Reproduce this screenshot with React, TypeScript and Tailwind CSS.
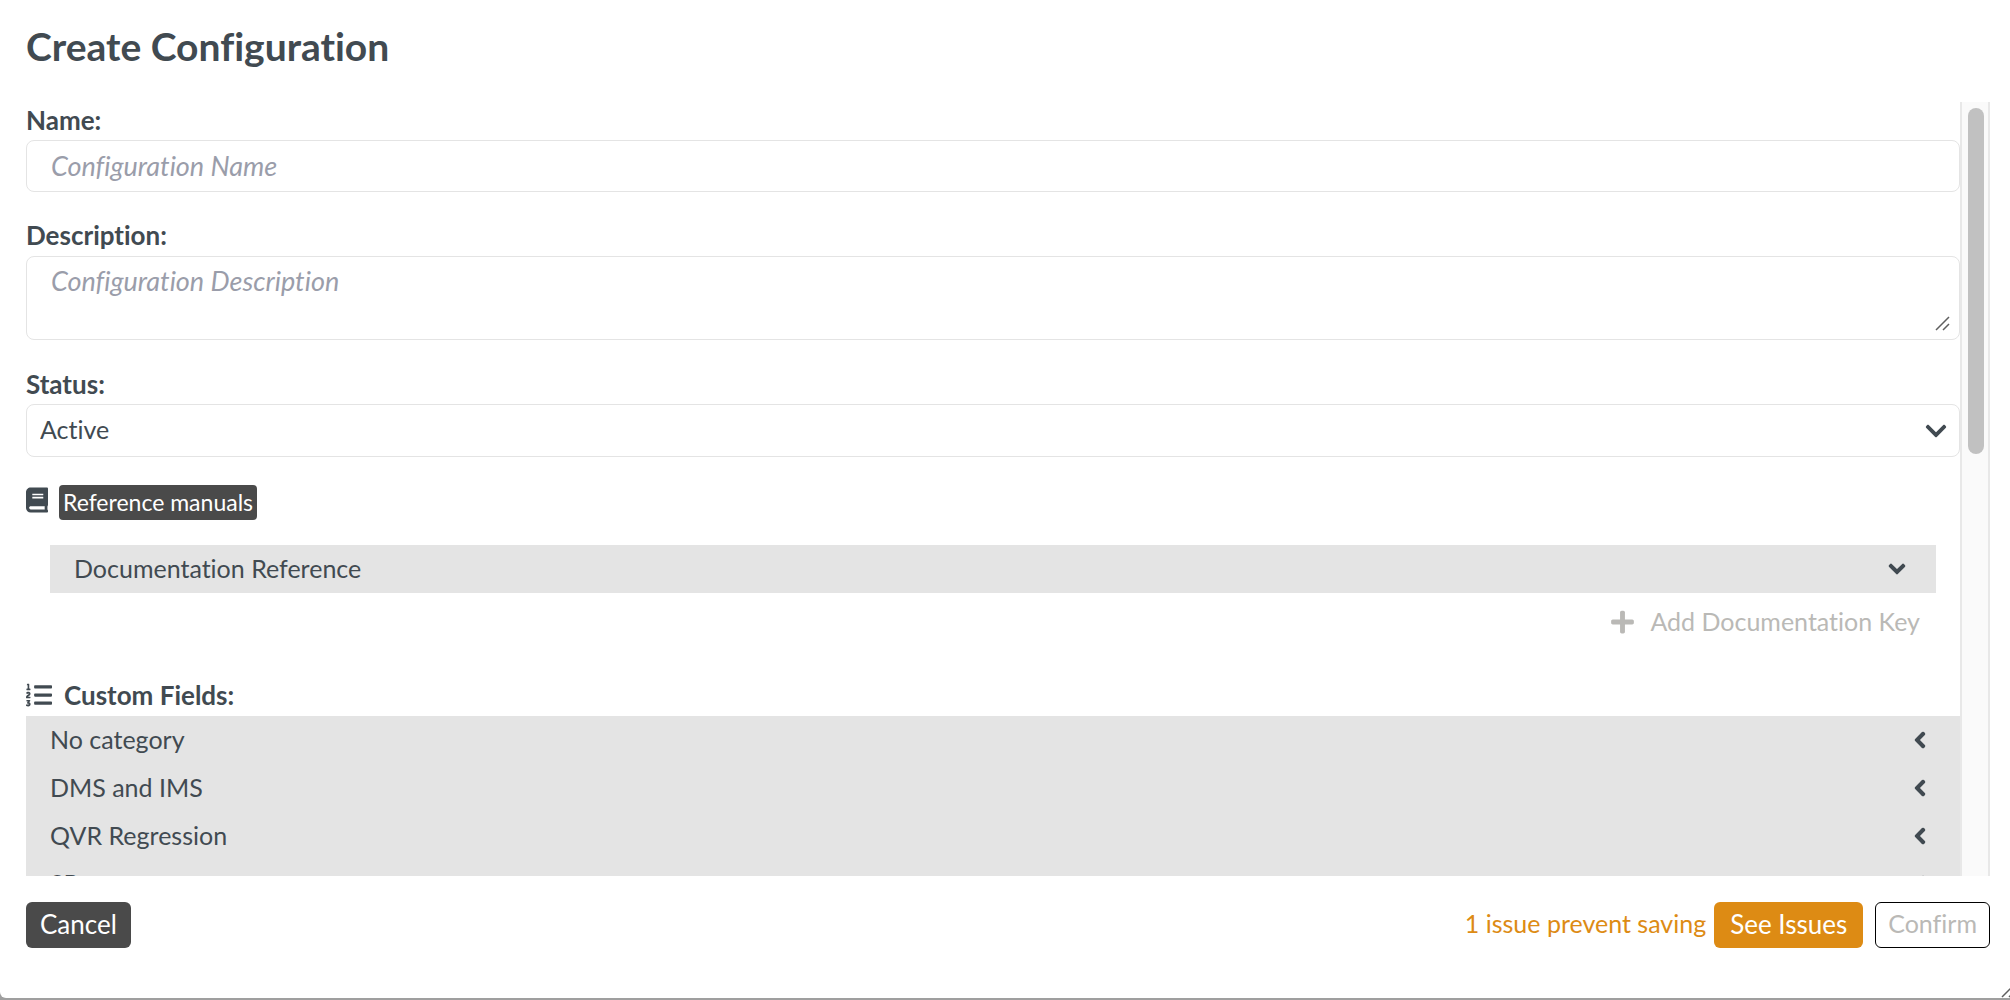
import { useState } from 'react';
import { FaBook, FaChevronDown, FaChevronLeft, FaListOl, FaPlus } from 'react-icons/fa';

const categories = ['No category', 'DMS and IMS', 'QVR Regression', 'SR'];

function Grip({ className }: { className: string }) {
  return (
    <svg viewBox="0 0 16 16" className={className} fill="none" stroke="#5f5f5f" strokeWidth="1.5" aria-hidden="true">
      <path d="M1 15 14 2M8 15 14 9" />
    </svg>
  );
}

export default function App() {
  const [status, setStatus] = useState('Active');
  return (
    <div className="h-screen bg-[#9f9f9f] pb-[2px] font-['Lato',sans-serif] text-[25px] text-[#414a51] [font-variant-ligatures:none]">
      <main className="relative flex h-full flex-col overflow-hidden rounded-bl-md bg-white pr-5 pl-[26px]">
        <h1 className="pt-[22px] pb-8 text-[39px] leading-[48px] font-bold">Create Configuration</h1>

        <div className="flex min-h-0 flex-1">
          <form id="config" className="min-w-0 flex-1 overflow-y-auto [scrollbar-width:none]">
            <label htmlFor="name" className="block pt-[3px] pb-[5px] text-[26px] leading-[30px] font-bold">Name:</label>
            <input
              id="name"
              placeholder="Configuration Name"
              className="block h-[52px] w-full rounded-lg border border-[#e4e4e4] px-6 pb-[2px] text-[27px] placeholder:text-[#9a9daa] placeholder:italic"
            />

            <label htmlFor="description" className="block pt-7 pb-[6px] text-[26px] leading-[30px] font-bold">Description:</label>
            <div className="relative">
              <textarea
                id="description"
                placeholder="Configuration Description"
                className="block h-[84px] w-full resize-none rounded-lg border border-[#e4e4e4] px-6 py-2 text-[27px] leading-8 placeholder:text-[#9a9daa] placeholder:italic"
              />
              <Grip className="absolute right-[9px] bottom-[9px] h-4 w-4" />
            </div>

            <label htmlFor="status" className="block pt-[29px] pb-[5px] text-[26px] leading-[30px] font-bold">Status:</label>
            <div className="relative">
              <select
                id="status"
                value={status}
                onChange={(e) => setStatus(e.target.value)}
                className="block h-[53px] w-full appearance-none rounded-lg border border-[#e4e4e4] bg-white px-[13px] pb-[2px]"
              >
                <option>Active</option>
                <option>Inactive</option>
              </select>
              <FaChevronDown className="pointer-events-none absolute top-[15px] right-3 h-6 w-6" />
            </div>

            <div className="flex items-start gap-[11px] pt-7">
              <FaBook className="mt-[2px] h-[26px] w-[22px]" />
              <span className="rounded bg-[#4a4a4a] px-1 text-[23px] leading-[35px] text-white">Reference manuals</span>
            </div>

            <div className="px-6 pt-[25px]">
              <button type="button" className="flex h-12 w-full items-center justify-between bg-[#e4e4e4] pr-[30px] pl-6">
                <span>Documentation Reference</span>
                <FaChevronDown className="h-[18px] w-[18px] stroke-current stroke-[36px]" />
              </button>
              <button type="button" disabled className="ml-auto flex h-[58px] items-center gap-4 pr-4 text-[#bab9b6]">
                <FaPlus className="h-[26px] w-[23px]" />
                <span>Add Documentation Key</span>
              </button>
            </div>

            <h2 className="flex items-center gap-3 pt-[29px] pb-[6px] text-[26px] leading-[30px] font-bold">
              <FaListOl className="h-[26px] w-[26px]" />
              Custom Fields:
            </h2>
            <div className="bg-[#e4e4e4]">
              {categories.map((c) => (
                <button key={c} type="button" className="flex h-12 w-full items-center justify-between pr-[34px] pl-6">
                  <span>{c}</span>
                  <FaChevronLeft className="h-[18px] w-3 stroke-current stroke-[36px]" />
                </button>
              ))}
            </div>
          </form>
          <div className="w-[30px] shrink-0 border-x-2 border-[#e8e8e8] bg-[#fafafa] pt-[6px] pl-[6px]">
            <div className="h-[45%] w-4 rounded-full bg-[#c1c1c1]" />
          </div>
        </div>

        <footer className="flex items-center pt-[26px] pb-[50px]">
          <button type="button" className="h-[46px] rounded-md bg-[#4a4a4a] px-[14px] pb-[2px] text-[26px] text-white">Cancel</button>
          <span className="ml-auto pr-2 pb-[2px]  text-[#dd8b14]">1 issue prevent saving</span>
          <button type="button" className="h-[46px] rounded-md bg-[#dd8b14] px-4 pb-[2px] text-[26px] text-white">See Issues</button>
          <button type="submit" form="config" disabled className="ml-3 h-[46px] rounded-md border border-black px-3 pb-[2px] text-[#bab9b6]">
            Confirm
          </button>
        </footer>
        <Grip className="absolute -right-[7px] bottom-0 h-4 w-4" />
      </main>
    </div>
  );
}
